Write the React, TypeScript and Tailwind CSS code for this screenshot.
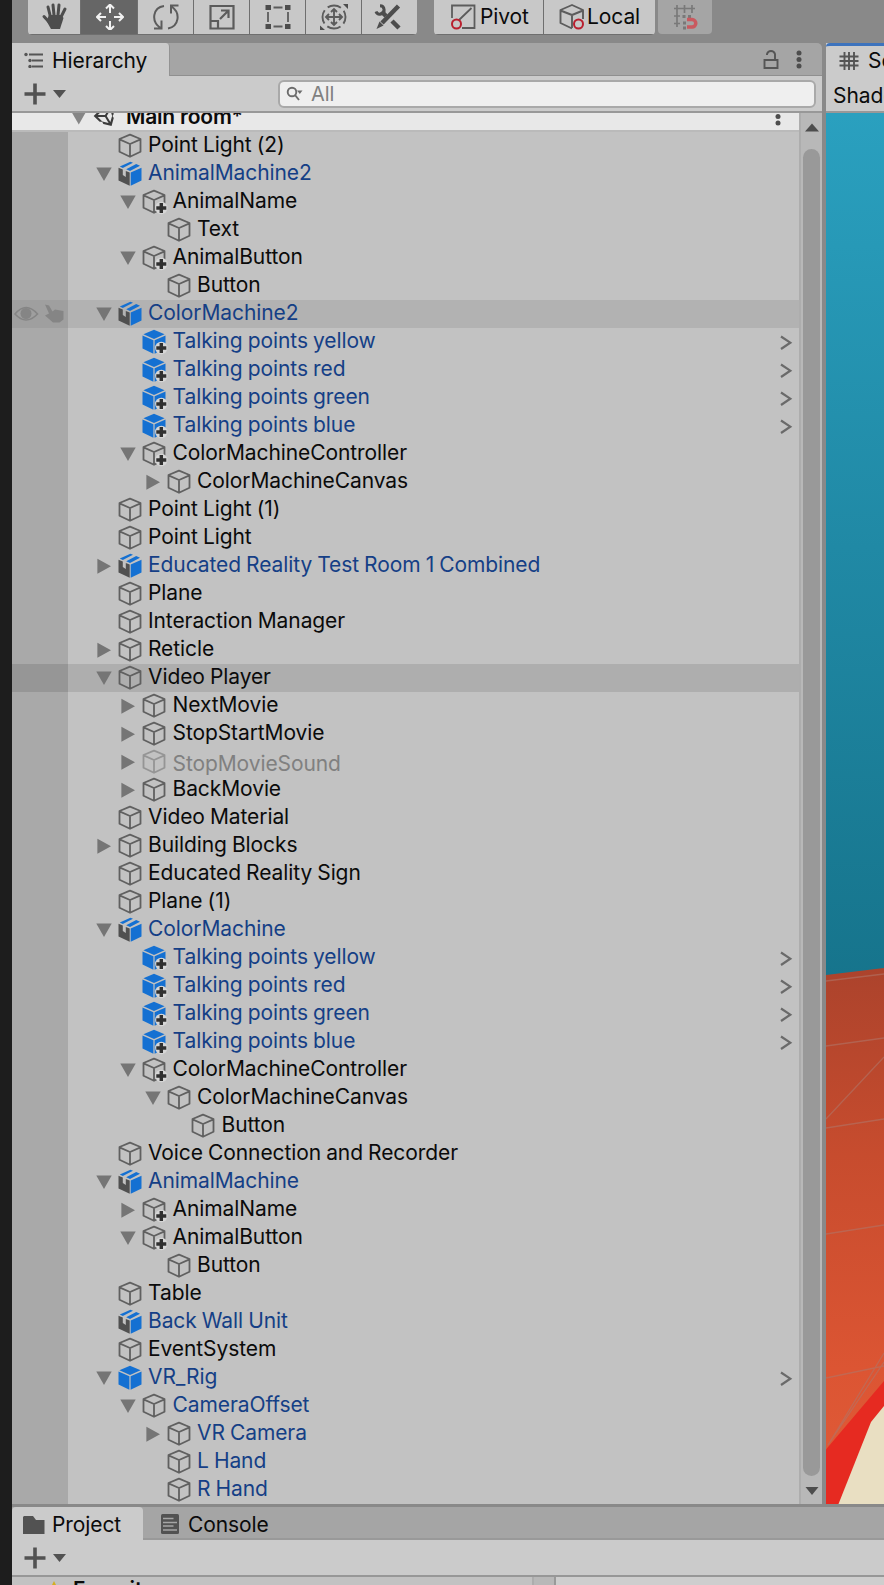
import type { ReactNode } from "react";
import { FaUnity } from "react-icons/fa";

type Kind = "cube" | "prefab" | "box";
type Item = {
  name: string;
  level: number;
  kind?: Kind;
  arrow?: "open" | "closed";
  blue?: boolean;
  added?: boolean;
  chevron?: boolean;
  state?: "hover" | "selected" | "disabled";
};

const talking: Item[] = ["yellow", "red", "green", "blue"].map((c) => ({
  name: `Talking points ${c}`,
  level: 1,
  kind: "prefab",
  blue: true,
  added: true,
  chevron: true,
}));

const items: Item[] = [
  { name: "Point Light (2)", level: 0 },
  { name: "AnimalMachine2", level: 0, kind: "box", arrow: "open", blue: true },
  { name: "AnimalName", level: 1, arrow: "open", added: true },
  { name: "Text", level: 2 },
  { name: "AnimalButton", level: 1, arrow: "open", added: true },
  { name: "Button", level: 2 },
  { name: "ColorMachine2", level: 0, kind: "box", arrow: "open", blue: true, state: "hover" },
  ...talking,
  { name: "ColorMachineController", level: 1, arrow: "open", added: true },
  { name: "ColorMachineCanvas", level: 2, arrow: "closed" },
  { name: "Point Light (1)", level: 0 },
  { name: "Point Light", level: 0 },
  { name: "Educated Reality Test Room 1 Combined", level: 0, kind: "box", arrow: "closed", blue: true },
  { name: "Plane", level: 0 },
  { name: "Interaction Manager", level: 0 },
  { name: "Reticle", level: 0, arrow: "closed" },
  { name: "Video Player", level: 0, arrow: "open", state: "selected" },
  { name: "NextMovie", level: 1, arrow: "closed" },
  { name: "StopStartMovie", level: 1, arrow: "closed" },
  { name: "StopMovieSound", level: 1, arrow: "closed", state: "disabled" },
  { name: "BackMovie", level: 1, arrow: "closed" },
  { name: "Video Material", level: 0 },
  { name: "Building Blocks", level: 0, arrow: "closed" },
  { name: "Educated Reality Sign", level: 0 },
  { name: "Plane (1)", level: 0 },
  { name: "ColorMachine", level: 0, kind: "box", arrow: "open", blue: true },
  ...talking,
  { name: "ColorMachineController", level: 1, arrow: "open", added: true },
  { name: "ColorMachineCanvas", level: 2, arrow: "open" },
  { name: "Button", level: 3 },
  { name: "Voice Connection and Recorder", level: 0 },
  { name: "AnimalMachine", level: 0, kind: "box", arrow: "open", blue: true },
  { name: "AnimalName", level: 1, arrow: "closed", added: true },
  { name: "AnimalButton", level: 1, arrow: "open", added: true },
  { name: "Button", level: 2 },
  { name: "Table", level: 0 },
  { name: "Back Wall Unit", level: 0, kind: "box", blue: true },
  { name: "EventSystem", level: 0 },
  { name: "VR_Rig", level: 0, kind: "prefab", arrow: "open", blue: true, chevron: true },
  { name: "CameraOffset", level: 1, arrow: "open", blue: true },
  { name: "VR Camera", level: 2, arrow: "closed", blue: true },
  { name: "L Hand", level: 2, blue: true },
  { name: "R Hand", level: 2, blue: true },
];

const indent = ["pl-[27.5px]", "pl-[52px]", "pl-[76.5px]", "pl-[101px]"];

function ItemIcon({ kind = "cube", added, dim }: { kind?: Kind; added?: boolean; dim?: boolean }) {
  return (
    <svg className={dim ? "h-[26px] w-[26px] shrink-0 opacity-45" : "h-[26px] w-[26px] shrink-0"} viewBox="0 0 26 26">
      {kind === "cube" && (
        <path d="M12 1.600 22.500 6v12.800L12 23.800 1.500 18.800V6ZM1.500 6.400 12 11l10.500-4.600M12 11v12.600" fill="none" stroke="#606060" strokeWidth="1.800" strokeLinejoin="round" />
      )}
      {kind === "prefab" && (
        <g fill="#1470d2">
          <path d="M12 .8 22.600 5.200 12 10 1.400 5.200Z" />
          <path d="M.5 6.600 11.400 11.300V24.800L.5 19.500Z" />
          <path d="M23.500 6.600 12.600 11.300V24.800L23.500 19.500Z" />
        </g>
      )}
      {kind === "box" && (
        <g>
          <path d="M.5 6.800 4.800 8.600v5.400l3 2V10L11.700 11.500v13.300L.5 19.600Z" fill="#505050" />
          <path d="M23.500 6.800 12.700 11.500v13.300L23.500 19.600Z" fill="#1470d2" />
          <path d="M12.400 .7 15 1.700 4.800 7 1.800 5.500Z" fill="#1470d2" />
          <path d="M18.200 3 22 4.800 12 9.900 8.200 8.200Z" fill="#1470d2" />
        </g>
      )}
      {added && (
        <g>
          <circle cx="19.300" cy="19" r="6.200" fill="#d6d6d6" />
          <path d="M19.300 14v10M14.300 19h10" stroke="#303030" strokeWidth="3.400" />
        </g>
      )}
    </svg>
  );
}

function Arrow({ dir }: { dir?: "open" | "closed" }) {
  return (
    <svg className="mr-1.5 h-4 w-4 shrink-0" viewBox="0 0 16 16" fill="#757575">
      {dir === "open" && <path d="M.3 1.500h15.400L8 15Z" />}
      {dir === "closed" && <path d="M1.400 .8v15L15 8.300Z" />}
    </svg>
  );
}

function Row({ item }: { item: Item }) {
  const hover = item.state === "hover";
  const selected = item.state === "selected";
  const disabled = item.state === "disabled";
  return (
    <div className={`flex h-7 shrink-0 ${hover ? "bg-[#b2b2b2]" : selected ? "bg-[#aeaeae]" : ""}`}>
      <div className={`flex w-14 shrink-0 items-center ${hover ? "bg-[#9f9f9f]" : selected ? "bg-[#969696]" : "bg-[#a9a9a9]"}`}>
        {hover && (
          <svg className="h-7 w-14" viewBox="0 0 56 28">
            <path d="M3 14Q14 1 25.500 14Q14 26 3 14Z" fill="none" stroke="#858585" strokeWidth="1.600" />
            <circle cx="14" cy="13.500" r="5.500" fill="#858585" />
            <path d="M33 4.500l4 1 3.500 6 2.500-2 8.500 1.500v8.500l-4 3H41l-8-7 4-2Z" fill="#858585" />
          </svg>
        )}
      </div>
      <div className={`flex min-w-0 flex-1 items-center ${indent[item.level]}`}>
        <Arrow dir={item.arrow} />
        <ItemIcon kind={item.kind} added={item.added} dim={disabled} />
        <span
          className={`ml-[4.500px] whitespace-pre leading-7 ${disabled ? "mt-[3px] text-[#808080]" : item.blue ? "-mt-0.5 text-[#153f86]" : "-mt-0.5 text-[#0b0b0b]"}`}
        >
          {item.name}
        </span>
        {item.chevron && (
          <svg className="mr-[5px] ml-auto h-[18px] w-4" viewBox="0 0 16 18" fill="none" stroke="#6a6a6a" strokeWidth="2.200">
            <path d="M3 3.500 12.300 9.700 3 16" />
          </svg>
        )}
      </div>
    </div>
  );
}

function Tool({ width, active, children }: { width: string; active?: boolean; children: ReactNode }) {
  return (
    <div className={`flex h-[35px] items-start border-b border-[#6f6f6f] ${width} ${active ? "bg-[#666]" : "bg-[#c8c8c8]"}`}>
      {children}
    </div>
  );
}

const toolSvg = "mx-auto mt-1 h-[26px] w-7 shrink-0";

function Toolbar() {
  return (
    <div className="flex h-[43px] shrink-0 bg-[#898989] pl-4">
      <div className="flex h-[35px] gap-px overflow-hidden rounded-b-[4px] bg-[#6f6f6f]">
        <Tool width="w-[52px]">
          <svg className="mt-0.5 ml-[13px] h-7 w-7 shrink-0" viewBox="0 0 28 28" fill="none" stroke="#4d4d4d" strokeWidth="3" strokeLinecap="round">
            <path d="M9.500 15 7 5M13 13 12 3M17 13 18 3M20 15 24 7M9 21 3 14.500" />
            <path d="M8 13h12.500l2 3-3.500 11h-9L5.500 19Z" fill="#4d4d4d" stroke="none" />
          </svg>
        </Tool>
        <Tool width="w-14" active>
          <svg className="mt-1 ml-[15px] h-[26px] w-7 shrink-0" viewBox="0 0 28 26" fill="none" stroke="#f2f2f2" strokeWidth="2">
            <path d="M14 9V1M10 4.500l4-4 4 4M14 17v8.500M10 22l4 4 4-4M10 13H1M5 9l-4 4 4 4M18 13h9M23 9l4 4-4 4" />
          </svg>
        </Tool>
        <Tool width="w-[55px]">
          <svg className={toolSvg} viewBox="0 0 28 26" fill="none" stroke="#5c5c5c" strokeWidth="2">
            <path d="M12 2C1 3.500-1.500 17 8.500 24M2 24.500h7.500V16.500M16 24.500C27 22.500 29 9 19.500 2.500M26.500 1.500H19V9.500" />
          </svg>
        </Tool>
        <Tool width="w-[55px]">
          <svg className={toolSvg} viewBox="0 0 28 26" fill="none" stroke="#5c5c5c" strokeWidth="2.200">
            <path d="M2.500 2h23v22.500h-23ZM2.500 17h7.500v7.500M12 15l8.500-8.500M13 6.500h7.500V14" />
          </svg>
        </Tool>
        <Tool width="w-[55px]">
          <svg className={toolSvg} viewBox="0 0 28 26" stroke="#5c5c5c" strokeWidth="1.800">
            <path d="M9.500 3.500h9M9.500 22.500h9M4 8v10M24 8v10" />
            <path d="M1.500 1h5.500v5H1.500ZM21 1h5.500v5H21ZM1.500 20h5.500v5H1.500ZM21 20h5.500v5H21Z" fill="#4d4d4d" stroke="none" />
          </svg>
        </Tool>
        <Tool width="w-[55px]">
          <svg className={toolSvg} viewBox="0 0 28 26" fill="none" stroke="#5c5c5c" strokeWidth="1.900">
            <circle cx="14" cy="13" r="11.500" strokeDasharray="14 4.060" strokeDashoffset="7" />
            <path d="M14 5v16M6 13h16M11 8l3-3 3 3M11 18l3 3 3-3M9 10l-3 3 3 3M19 10l3 3-3 3" />
            <path d="M23 0h5v5ZM0 21.500V26h5Z" fill="#4d4d4d" stroke="none" />
          </svg>
        </Tool>
        <Tool width="w-[55px]">
          <svg className="mt-1 ml-3 h-[26px] w-7 shrink-0" viewBox="0 0 28 26" fill="none" stroke="#4d4d4d">
            <path d="M7.500 7.500 12 12M18 17l7 7" strokeWidth="4.500" />
            <path d="M24.500 2 8 19" strokeWidth="4.500" />
            <path d="M5.500 17.500 9.500 21.500 2.500 25Z" fill="#4d4d4d" stroke="none" />
            <path d="M6 1.800A4.200 4.200 0 1 1 2 7.500" strokeWidth="3" />
          </svg>
        </Tool>
      </div>
      <div className="ml-[17px] flex h-[35px] gap-px overflow-hidden rounded-b-[4px] bg-[#6f6f6f]">
        <Tool width="w-[109px]">
          <svg className="mt-1 ml-4 h-[26px] w-[26px] shrink-0" viewBox="0 0 26 26" fill="none" stroke="#5c5c5c" strokeWidth="1.800">
            <path d="M2 14V1.500h22.500V24H12M9 16 21.500 4" />
            <circle cx="6.500" cy="20" r="4.500" stroke="#b91f2e" strokeWidth="2" />
          </svg>
          <span className="ml-1 leading-[34px]">Pivot</span>
        </Tool>
        <Tool width="w-[111px]">
          <svg className="mt-1 ml-3.5 h-[26px] w-[26px] shrink-0" viewBox="0 0 26 26" fill="none" stroke="#5c5c5c" strokeWidth="1.900" strokeLinejoin="round">
            <path d="M14 24.500 2.500 19V6L14 1l11 5v9M2.500 6.500 14 11l11-4.500M14 11v13" />
            <circle cx="20.500" cy="20" r="4.500" stroke="#b91f2e" strokeWidth="2" fill="#c8c8c8" />
          </svg>
          <span className="ml-[3px] leading-[34px]">Local</span>
        </Tool>
      </div>
      <div className="ml-[3px] flex h-[34px] w-[54px] rounded-b-[4px] bg-[#a5a5a5]">
        <svg className="mt-1 ml-3.5 h-[26px] w-7" viewBox="0 0 28 26" fill="none" stroke="#797979" strokeWidth="1.700">
          <path d="M2 4.500h21M5 1v22M12.500 1v8M20 1v8M2 12h6M2 19.500h6" />
          <path d="M10.500 12.500h3M16 12.500h3M11 19h3M11 24h3" strokeWidth="3" />
          <path d="M15 15.500h5a3.800 3.800 0 0 1 0 7.600h-5" stroke="#c9595f" strokeWidth="3.500" />
        </svg>
      </div>
    </div>
  );
}

function AddButton() {
  return (
    <svg className="h-6 w-12 shrink-0" viewBox="0 0 48 24">
      <path d="M.5 12h21M11 1.500v21" stroke="#525252" strokeWidth="3.600" />
      <path d="M29 8h13L35.500 16Z" fill="#525252" />
    </svg>
  );
}

function Dots() {
  return (
    <svg className="h-5 w-1.5" viewBox="0 0 6 20" fill="#4d4d4d">
      <circle cx="3" cy="3" r="2.500" />
      <circle cx="3" cy="9.500" r="2.500" />
      <circle cx="3" cy="16" r="2.500" />
    </svg>
  );
}

function Hierarchy() {
  return (
    <div className="flex w-[810px] shrink-0 flex-col">
      <div className="flex h-[33px] shrink-0 rounded-tr-[5px] border-b border-[#8f8f8f] bg-[#a5a5a5]">
        <div className="-mb-px flex w-[158px] shrink-0 items-center rounded-tr-[4px] border-r border-[#939393] bg-[#cbcbcb] pl-3">
          <svg className="mt-px h-4 w-5" viewBox="0 0 20 16" stroke="#555" strokeWidth="1.900">
            <path d="M5 2.500h14M8 8.500h11M8 14.500h11" />
            <g fill="#555" stroke="none">
              <circle cx="2" cy="2.500" r="1.700" />
              <circle cx="6" cy="8.500" r="1.700" />
              <circle cx="6" cy="14.500" r="1.700" />
            </g>
          </svg>
          <span className="ml-2 pt-0.5">Hierarchy</span>
        </div>
        <div className="ml-auto flex items-center gap-[17px] pt-px pr-5">
          <svg className="h-5 w-4" viewBox="0 0 16 20" fill="none" stroke="#555" strokeWidth="1.900">
            <path d="M1.500 10h13v8h-13ZM4 5V4q1-3 4-3t4 3v6" />
          </svg>
          <Dots />
        </div>
      </div>
      <div className="flex h-[35px] shrink-0 items-center bg-[#cbcbcb] pt-px pr-1.5 pl-3">
        <AddButton />
        <div className="ml-auto flex h-7 w-[538px] items-center rounded-[6px] border-2 border-[#a9a9a9] bg-[#efefef] pl-1.5">
          <svg className="h-4 w-[18px]" viewBox="0 0 18 16" fill="none" stroke="#6c6c6c" strokeWidth="1.900">
            <circle cx="6" cy="6" r="4.300" />
            <path d="m9 9 4 5" />
            <path d="M11 4.500h5.500L13.800 8Z" fill="#6c6c6c" stroke="none" />
          </svg>
          <span className="ml-[7px] text-[20px] text-[#808080]">All</span>
        </div>
      </div>
      <div className="flex h-[1393px] shrink-0 border-t-2 border-[#989898]">
        <div className="flex w-[787px] flex-col bg-[#c2c2c2]">
          <div className="flex h-[19px] shrink-0 overflow-hidden border-b-2 border-[#bababa] bg-[#e8e8e8]">
            <svg className="-mt-1 ml-[59px] h-4 w-4 shrink-0" viewBox="0 0 16 16" fill="#858585">
              <path d="M0 2h15.500L7.800 15.500Z" />
            </svg>
            <FaUnity className="-mt-[9px] ml-1.5 h-6 w-6 shrink-0 text-[#3c3c3c]" />
            <span className="-mt-[9px] ml-[9px] h-7 shrink-0 text-[21px] leading-[26px] font-semibold tracking-[-.2px] [word-spacing:0px]">Main room*</span>
            <div className="-mt-1.5 mr-[18px] ml-auto">
              <Dots />
            </div>
          </div>
          {items.map((item, i) => (
            <Row key={i} item={item} />
          ))}
        </div>
        <div className="flex w-[23px] shrink-0 flex-col items-center border-l-2 border-[#adadad] bg-[#b8b8b8]">
          <svg className="mt-2 h-3 w-3.5 shrink-0" viewBox="0 0 14 12" fill="#4d4d4d">
            <path d="M0 10.500h14L7 2.500Z" />
          </svg>
          <div className="mt-4 h-[1327px] w-[17px] shrink-0 rounded-full bg-[#999]" />
          <svg className="mt-2 h-3 w-3.5 shrink-0" viewBox="0 0 14 12" fill="#4d4d4d">
            <path d="M.5 3h13L7 11Z" />
          </svg>
        </div>
      </div>
    </div>
  );
}

function SceneView() {
  return (
    <div className="ml-1 flex w-[58px] shrink-0 flex-col overflow-hidden bg-[#cbcbcb]">
      <div className="flex h-[34px] shrink-0 items-center rounded-tl-[4px] border-t-[3px] border-[#3d73bd] pl-[13px]">
        <svg className="-mt-0.5 h-5 w-5 shrink-0" viewBox="0 0 20 20" stroke="#555" strokeWidth="1.900">
          <path d="M5.500 1v18M10 1v18M15 1v18M.5 5.500h19M.5 10h19M.5 14.500h19" />
        </svg>
        <span className="-mt-px ml-[9px] shrink-0">Scene</span>
      </div>
      <div className="h-[34px] shrink-0 pl-[7px] leading-[37px]">Shaded</div>
      <svg className="h-[1393px] w-[58px] shrink-0" viewBox="0 111 58 1393">
        <defs>
          <linearGradient id="wall" x1="0" y1="0" x2="0" y2="1">
            <stop offset="0" stopColor="#2aa0bf" />
            <stop offset=".5" stopColor="#2089a5" />
            <stop offset="1" stopColor="#16748c" />
          </linearGradient>
          <linearGradient id="floor" x1="0" y1="0" x2="0" y2="1">
            <stop offset="0" stopColor="#ac432c" />
            <stop offset=".35" stopColor="#c74c2e" />
            <stop offset=".75" stopColor="#dc5533" />
            <stop offset="1" stopColor="#e05c38" />
          </linearGradient>
        </defs>
        <path d="M0 111h58v870H0Z" fill="#989898" />
        <path d="M0 113h58v870H0Z" fill="url(#wall)" />
        <path d="M0 975 58 968V1504H0Z" fill="url(#floor)" />
        <path
          d="M0 981 58 974M0 1046 58 1038M0 1119 58 1057M0 1128 58 1119M0 1234 58 1225M0 1378 58 1366M2 1445 58 1353M2 1445 58 1362"
          fill="none"
          stroke="#b07468"
          strokeOpacity=".6"
          strokeWidth="1.300"
        />
        <path d="M0 1449.500 58 1381V1504H0Z" fill="#e62a21" />
        <path d="M58 1406 45 1422 12.500 1504H58Z" fill="#e9dfc2" />
      </svg>
    </div>
  );
}

function ProjectPanel() {
  return (
    <div className="flex h-[81px] shrink-0 flex-col border-t-[3px] border-[#898989] bg-[#cbcbcb]">
      <div className="flex h-[33px] shrink-0 border-b-2 border-[#999] bg-[#a5a5a5]">
        <div className="-mb-0.5 flex w-[131px] shrink-0 items-center rounded-t-[4px] bg-[#cbcbcb] pl-[11px]">
          <svg className="mt-0.5 h-[18px] w-[22px]" viewBox="0 0 22 18" fill="#525252">
            <path d="M1 0h9l3 4h8.500v14H0V1Z" />
          </svg>
          <span className="ml-[7px] pt-0.5">Project</span>
        </div>
        <div className="flex items-center pl-[18px]">
          <svg className="mt-[3px] h-5 w-[18px]" viewBox="0 0 18 20">
            <rect width="18" height="20" rx="1.500" fill="#525252" />
            <path d="M2 4.500h10.500M2 8.500h14M2 12h10.500M2 16h14" stroke="#a5a5a5" strokeWidth="1.500" />
          </svg>
          <span className="mt-1 ml-[9px]">Console</span>
        </div>
      </div>
      <div className="flex h-[35px] shrink-0 items-center pt-px pl-3">
        <AddButton />
      </div>
      <div className="flex h-[10px] shrink-0 overflow-hidden border-t-2 border-[#979797] bg-[#c2c2c2]">
        <svg className="mt-1 ml-[31px] h-5 w-5 shrink-0" viewBox="0 0 20 20" fill="#d3ae22">
          <path d="m11 0 3 6 6 1-4 4 1 7-6-3-6 3 1-7-5-4 7-1Z" />
        </svg>
        <span className="-mt-px ml-2.5 h-7 w-[459px] shrink-0 text-[21px] leading-7 font-semibold">Favorites</span>
        <div className="w-6 shrink-0 border-r-2 border-l-2 border-r-[#999] border-l-[#adadad] bg-[#b8b8b8]" />
        <div className="flex-1 bg-[#cecece]" />
      </div>
    </div>
  );
}

export default function App() {
  return (
    <div className="flex h-[1585px] w-[884px] overflow-hidden bg-[#1d1d1d] font-['Inter',sans-serif] text-[21px] tracking-[-.09px] text-[#0b0b0b] [word-spacing:-.7px]">
      <div className="w-3 shrink-0" />
      <div className="flex w-[872px] shrink-0 flex-col bg-[#898989]">
        <Toolbar />
        <div className="flex h-[1461px] shrink-0">
          <Hierarchy />
          <SceneView />
        </div>
        <ProjectPanel />
      </div>
    </div>
  );
}
